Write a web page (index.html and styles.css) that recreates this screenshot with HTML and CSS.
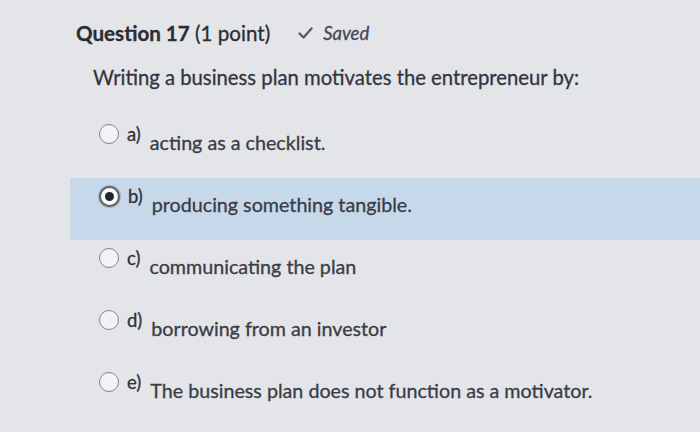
FILE: index.html
```html
<!DOCTYPE html>
<html>
<head>
<meta charset="utf-8">
<link rel="stylesheet" href="styles.css">
</head>
<body>
<div class="page">
  <div class="header">
    <h2 class="title"><span class="qnum">Question 17</span> <span class="points">(1 point)</span></h2>
    <span class="saved">
      <svg class="check" width="15" height="12" viewBox="0 0 15 12"><path d="M1.5 6.5 L5.5 10.5 L13.5 1.5" fill="none" stroke="#55577a" stroke-width="2.4" stroke-linecap="round" stroke-linejoin="round"/></svg>
      <span class="saved-text">Saved</span>
    </span>
  </div>
  <p class="prompt">Writing a business plan motivates the entrepreneur by:</p>
  <div class="options">
    <div class="option">
      <span class="radio"></span><span class="letter">a)</span><span class="answer">acting as a checklist.</span>
    </div>
    <div class="option selected">
      <span class="radio checked"></span><span class="letter">b)</span><span class="answer">producing something tangible.</span>
    </div>
    <div class="option">
      <span class="radio"></span><span class="letter">c)</span><span class="answer">communicating the plan</span>
    </div>
    <div class="option">
      <span class="radio"></span><span class="letter">d)</span><span class="answer">borrowing from an investor</span>
    </div>
    <div class="option">
      <span class="radio"></span><span class="letter">e)</span><span class="answer">The business plan does not function as a motivator.</span>
    </div>
  </div>
</div>
</body>
</html>
```

FILE: styles.css
```css
html, body {
  margin: 0;
  padding: 0;
  background: #e3e5e9;
  width: 700px;
  height: 432px;
  overflow: hidden;
}
.page {
  font-family: Lato, "Open Sans", sans-serif;
  color: #3a3c45;
  padding: 20px 0 0 70px;
  -webkit-text-stroke: 0.3px currentColor;
}
.header {
  display: flex;
  align-items: center;
  gap: 28px;
  padding-left: 6px;
  height: 26px;
}
.title {
  margin: 0;
  font-size: 20.6px;
  line-height: 26px;
  font-weight: 400;
  color: #2c2d34;
}
.qnum {
  font-weight: 700;
}
.saved {
  display: flex;
  align-items: center;
  gap: 10px;
}
.saved-text {
  font-style: italic;
  font-size: 18.5px;
  color: #45475a;
}
.prompt {
  margin: 18px 0 0 23px;
  font-size: 20.3px;
  line-height: 26px;
  color: #33353e;
}
.options {
  margin-top: 26px;
}
.option {
  display: flex;
  align-items: flex-start;
  height: 62px;
  box-sizing: border-box;
  padding: 8px 0 0 29px;
}
.option.selected {
  background: #c6d8ea;
}
.radio {
  width: 18px;
  height: 18px;
  border: 1.5px solid #82858d;
  border-radius: 50%;
  background: #f2f3f5;
  flex: none;
  box-sizing: content-box;
  display: flex;
  align-items: center;
  justify-content: center;
}
.radio.checked {
  border: 2px solid #5f626b;
  width: 17px;
  height: 17px;
  background: #fbfbfc;
  box-shadow: 0 0 0 1px #a9b2c0;
}
.radio.checked::after {
  content: "";
  width: 9px;
  height: 9px;
  border-radius: 50%;
  background: #23252c;
}
.letter {
  margin: 0 0 0 8px;
  font-size: 18.5px;
  line-height: 20px;
  color: #2f3139;
}
.answer {
  margin: 7px 0 0 9px;
  font-size: 19.7px;
  line-height: 24px;
  color: #3a3c46;
}
```
